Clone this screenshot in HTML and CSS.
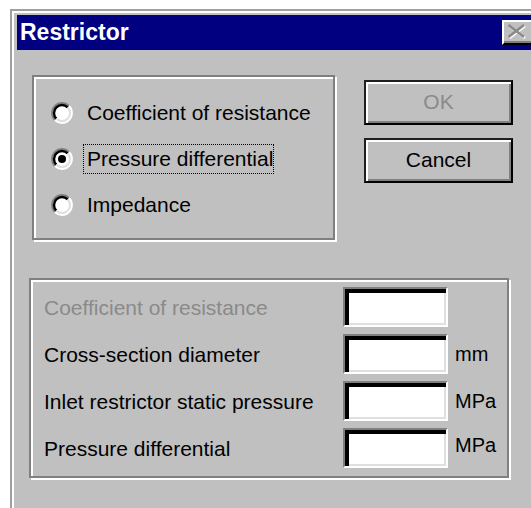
FILE: index.html
```html
<!DOCTYPE html>
<html lang="en">
<head>
<meta charset="utf-8">
<title>Restrictor</title>
<link rel="stylesheet" href="styles.css">
</head>
<body>
<div class="window">
  <div class="titlebar">
    <span class="title">Restrictor</span>
    <span class="close" aria-label="Close">
      <svg width="20" height="15" viewBox="0 0 20 15">
        <path d="M2.5 2 L18 14 M18 2 L2.5 14" stroke="#fff" stroke-width="2.6" fill="none"/>
        <path d="M1.5 1 L17 13 M17 1 L1.5 13" stroke="#8a8a8a" stroke-width="2.6" fill="none"/>
      </svg>
    </span>
  </div>
  <div class="client">
    <div class="top-row">
      <div class="group modes">
        <label class="radio-row">
          <svg class="radio" width="22" height="22" viewBox="0 0 22 22">
            <circle cx="11" cy="11" r="9" fill="#fff"/>
            <path d="M3.93 18.07 A10 10 0 0 1 18.07 3.93" stroke="#808080" stroke-width="2" fill="none"/>
            <path d="M18.07 3.93 A10 10 0 0 1 3.93 18.07" stroke="#fff" stroke-width="2" fill="none"/>
            <path d="M5.34 16.66 A8 8 0 0 1 16.66 5.34" stroke="#000" stroke-width="2.4" fill="none"/>
            <path d="M16.66 5.34 A8 8 0 0 1 5.34 16.66" stroke="#dfdfdf" stroke-width="2" fill="none"/>
          </svg>
          <span class="radio-text">Coefficient of resistance</span>
        </label>
        <label class="radio-row">
          <svg class="radio" width="22" height="22" viewBox="0 0 22 22">
            <circle cx="11" cy="11" r="9" fill="#fff"/>
            <path d="M3.93 18.07 A10 10 0 0 1 18.07 3.93" stroke="#808080" stroke-width="2" fill="none"/>
            <path d="M18.07 3.93 A10 10 0 0 1 3.93 18.07" stroke="#fff" stroke-width="2" fill="none"/>
            <path d="M5.34 16.66 A8 8 0 0 1 16.66 5.34" stroke="#000" stroke-width="2.4" fill="none"/>
            <path d="M16.66 5.34 A8 8 0 0 1 5.34 16.66" stroke="#dfdfdf" stroke-width="2" fill="none"/>
            <circle cx="11" cy="11" r="4" fill="#000"/>
          </svg>
          <span class="radio-text focused">Pressure differential</span>
        </label>
        <label class="radio-row">
          <svg class="radio" width="22" height="22" viewBox="0 0 22 22">
            <circle cx="11" cy="11" r="9" fill="#fff"/>
            <path d="M3.93 18.07 A10 10 0 0 1 18.07 3.93" stroke="#808080" stroke-width="2" fill="none"/>
            <path d="M18.07 3.93 A10 10 0 0 1 3.93 18.07" stroke="#fff" stroke-width="2" fill="none"/>
            <path d="M5.34 16.66 A8 8 0 0 1 16.66 5.34" stroke="#000" stroke-width="2.4" fill="none"/>
            <path d="M16.66 5.34 A8 8 0 0 1 5.34 16.66" stroke="#dfdfdf" stroke-width="2" fill="none"/>
          </svg>
          <span class="radio-text">Impedance</span>
        </label>
      </div>
      <div class="buttons">
        <div class="btn disabled">OK</div>
        <div class="btn">Cancel</div>
      </div>
    </div>
    <div class="group params">
      <span class="label disabled">Coefficient of resistance</span>
      <div class="field"></div>
      <span class="unit"></span>

      <span class="label">Cross-section diameter</span>
      <div class="field"></div>
      <span class="unit">mm</span>

      <span class="label">Inlet restrictor static pressure</span>
      <div class="field"></div>
      <span class="unit">MPa</span>

      <span class="label">Pressure differential</span>
      <div class="field"></div>
      <span class="unit up">MPa</span>
    </div>
  </div>
</div>
</body>
</html>
```
FILE: styles.css
```css
html, body {
  margin: 0;
  padding: 0;
  background: #fff;
  overflow: hidden;
}

body {
  width: 531px;
  height: 508px;
  font-family: "Liberation Sans", Arial, sans-serif;
  font-size: 21px;
  color: #000;
}

/* dialog frame */
.window {
  margin: 9px 0 0 10px;
  width: 560px;
  height: 520px;
  box-sizing: border-box;
  background: #c0c0c0;
  border-top: 2px solid #a0a0a0;
  border-left: 2px solid #a0a0a0;
  box-shadow: inset 2px 2px 0 #fff;
  padding: 4px 0 0 5px;
}

.titlebar {
  width: 518px;
  height: 35px;
  background: #000080;
  display: flex;
  align-items: center;
  padding: 0 4px 0 3px;
  box-sizing: border-box;
}

.title {
  color: #fff;
  font-weight: bold;
  font-size: 23px;
  flex: 1;
}

.close {
  width: 29px;
  height: 25px;
  box-sizing: border-box;
  background: #c0c0c0;
  border-top: 2px solid #fff;
  border-left: 2px solid #fff;
  border-bottom: 2px solid #000;
  box-shadow: inset 0 -2px 0 #808080;
  display: flex;
  align-items: center;
  justify-content: center;
  padding: 0 2px 2px 0;
}

.client {
  padding: 25px 0 0 12px;
}

.top-row {
  display: flex;
  align-items: flex-start;
}

/* etched group box */
.group {
  box-sizing: border-box;
  border: 2px solid #808080;
  box-shadow: inset 2px 2px 0 #fff, 2px 2px 0 #fff;
}

.modes {
  margin-left: 3px;
  width: 303px;
  height: 165px;
  padding: 21px 0 0 17px;
  display: flex;
  flex-direction: column;
  gap: 16px;
}

.radio-row {
  display: flex;
  align-items: center;
  height: 30px;
}

.radio {
  flex: none;
  margin-right: 10px;
}

.radio-text {
  padding: 3px 0 3px 3px;
  border: 1px solid transparent;
  line-height: 22px;
}

.radio-text.focused {
  border: 1px dotted #000;
}

.buttons {
  margin: 5px 0 0 29px;
  display: flex;
  flex-direction: column;
  gap: 13px;
}

.btn {
  width: 149px;
  height: 45px;
  box-sizing: border-box;
  border: 2px solid #000;
  border-top-color: #202020;
  border-left-color: #202020;
  box-shadow: inset 2px 2px 0 #fff, inset -2px -2px 0 #808080;
  display: flex;
  align-items: center;
  justify-content: center;
  padding-bottom: 1px;
}

.btn.disabled {
  color: #8a8a8a;
}

.params {
  margin-top: 38px;
  width: 480px;
  height: 200px;
  padding: 7px 0 0 13px;
  display: grid;
  grid-template-columns: 299px 105px auto;
  grid-auto-rows: 40px;
  row-gap: 7px;
  align-items: center;
}

.label {
  padding-top: 1px;
}

.label.disabled {
  color: #8a8a8a;
}

.field {
  width: 105px;
  height: 40px;
  box-sizing: border-box;
  background: #fff;
  border: 2px solid;
  border-color: #808080 #fff #fff #808080;
  box-shadow: inset 4px 4px 0 #000, inset -2px -2px 0 #dfdfdf;
}

.unit {
  padding-left: 7px;
  font-size: 20px;
}

.unit.up {
  padding-bottom: 6px;
}
```
